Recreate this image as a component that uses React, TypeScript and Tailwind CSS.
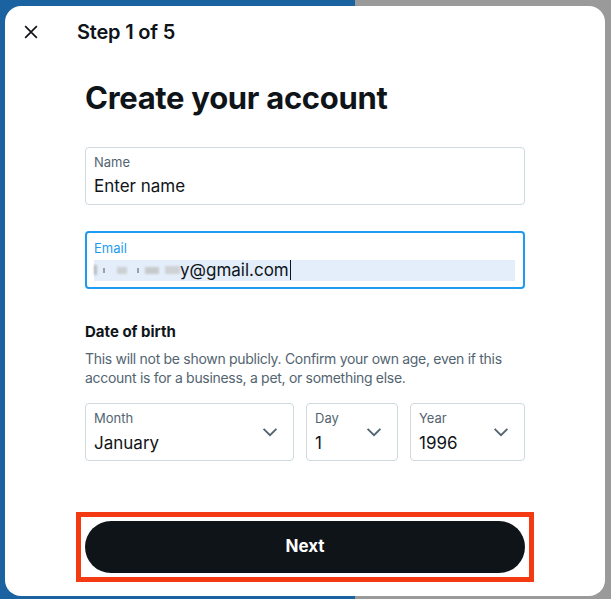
import React from "react";

function Chevron() {
  return (
    <svg width="22" height="22" viewBox="0 0 24 24" className="shrink-0">
      <path d="M5 8.5l7 7 7-7" fill="none" stroke="#536471" strokeWidth="2" />
    </svg>
  );
}

function SelectBox({ label, value, w }: { label: string; value: string; w: string }) {
  return (
    <div className={`${w} h-[58px] rounded-[4px] border border-[#cfd9de] flex items-center pl-[8px] pr-[12px]`}>
      <div className="flex-1 flex flex-col">
        <span className="text-[13px] leading-[16px] text-[#536471]">{label}</span>
        <span className="text-[17px] leading-[24px] text-[#0f1419] mt-[5px]">{value}</span>
      </div>
      <Chevron />
    </div>
  );
}

export default function App() {
  return (
    <div
      className="w-[611px] h-[599px] overflow-hidden bg-[linear-gradient(to_right,#1b63a0_0px,#1b63a0_355px,#9a9a9a_355px)] pt-[6px] pl-[5px]"
      style={{ fontFamily: "Inter, 'Noto Sans', sans-serif" }}
    >
      <div className="w-[600px] h-[590px] bg-white rounded-[16px] flex flex-col">
        <div className="h-[52px] flex items-center">
          <div className="w-[52px] flex justify-center">
            <svg width="20" height="20" viewBox="0 0 24 24">
              <path d="M5 5l14 14M19 5L5 19" stroke="#0f1419" strokeWidth="2" fill="none" />
            </svg>
          </div>
          <span className="ml-[20px] text-[20px] font-semibold text-[#0f1419] tracking-[-0.2px]">Step 1 of 5</span>
        </div>

        <div className="px-[80px] flex flex-col">
          <h1 className="mt-[22px] text-[31px] leading-[36px] font-bold text-[#0f1419] tracking-[-0.3px]">
            Create your account
          </h1>

          <div className="mt-[31px] h-[58px] rounded-[4px] border border-[#cfd9de] flex flex-col justify-center pl-[8px]">
            <span className="text-[13px] leading-[16px] text-[#536471]">Name</span>
            <span className="text-[17px] leading-[24px] text-[#0f1419] mt-[4px]">Enter name</span>
          </div>

          <div className="mt-[26px] h-[58px] rounded-[4px] border-2 border-[#1d9bf0] flex flex-col justify-center pl-[7px] pr-[8px]">
            <span className="text-[13px] leading-[16px] text-[#1d9bf0]">Email</span>
            <div className="mt-[4px] h-[21px] bg-[#e4eefa] flex items-center text-[17px] leading-[21px] text-[#0f1419]">
              <span className="w-[86px] h-[12px] flex items-center gap-[6px]">
                <span className="w-[4px] h-[10px] bg-[#b9bcc0] blur-[1px]" />
                <span className="w-[2px] h-[5px] bg-[#9aa0a6]" />
                <span className="w-[12px] h-[7px] bg-[#cdd0d3] blur-[1px] ml-[6px]" />
                <span className="w-[2px] h-[5px] bg-[#9aa0a6] ml-[4px]" />
                <span className="w-[16px] h-[7px] bg-[#c7cacd] blur-[1px]" />
                <span className="w-[18px] h-[8px] bg-[#cfd2d5] blur-[1px]" />
              </span>
              <span>y@gmail.com</span>
              <span className="w-[1px] h-[20px] bg-[#0f1419] ml-[1px]" />
            </div>
          </div>

          <div className="mt-[33px] text-[15px] leading-[20px] font-bold text-[#0f1419]">Date of birth</div>
          <p className="mt-[7px] text-[14px] leading-[19px] text-[#536471] tracking-[-0.3px]">
            This will not be shown publicly. Confirm your own age, even if this account is for a business, a pet, or
            something else.
          </p>

          <div className="mt-[16px] flex gap-[12px]">
            <SelectBox label="Month" value="January" w="w-[209px]" />
            <SelectBox label="Day" value="1" w="w-[92px]" />
            <SelectBox label="Year" value="1996" w="w-[115px]" />
          </div>

          <div className="mt-[51px] -mx-[9px] border-[5px] border-[#f43a12] p-[4px]">
            <button className="w-full h-[52px] rounded-full bg-[#0f1419] text-white text-[17px] font-bold">
              Next
            </button>
          </div>
        </div>
      </div>
    </div>
  );
}
